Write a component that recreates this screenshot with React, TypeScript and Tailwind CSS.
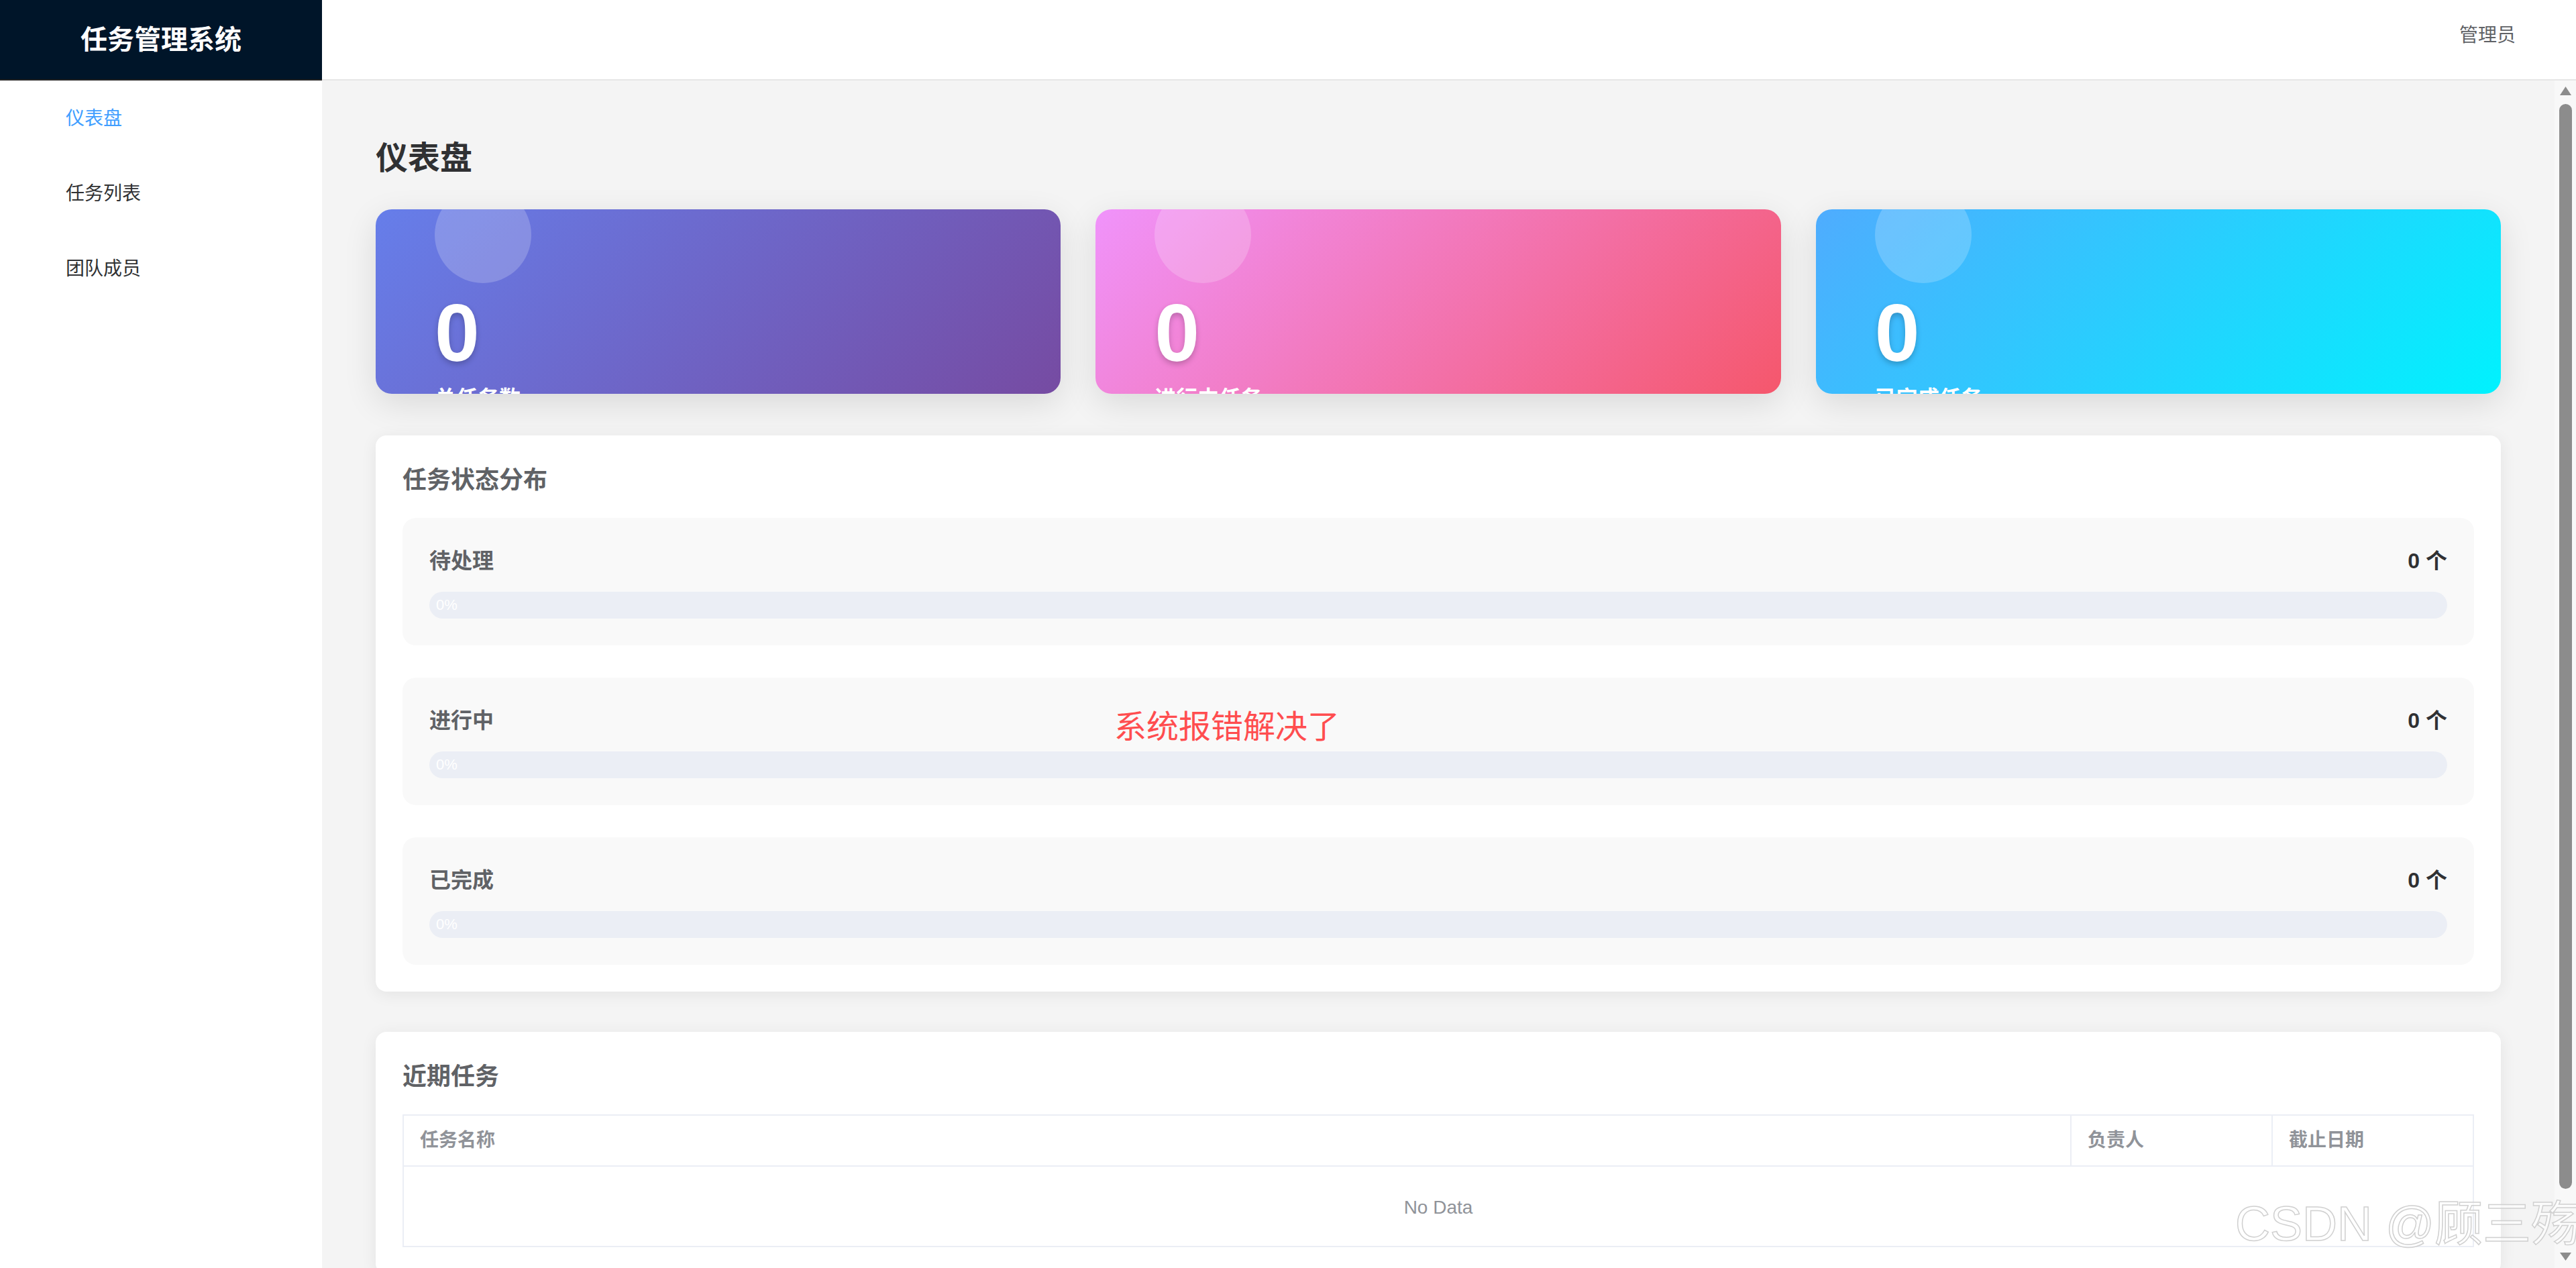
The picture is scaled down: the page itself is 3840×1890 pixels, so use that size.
import React from "react";

const statCards = [
  { value: 0, label: "总任务数", bg: "bg-[linear-gradient(135deg,#667eea_0%,#764ba2_100%)]" },
  { value: 0, label: "进行中任务", bg: "bg-[linear-gradient(135deg,#f093fb_0%,#f5576c_100%)]" },
  { value: 0, label: "已完成任务", bg: "bg-[linear-gradient(135deg,#4facfe_0%,#00f2fe_100%)]" },
];

const statusList = [
  { name: "待处理", count: 0, percent: 0 },
  { name: "进行中", count: 0, percent: 0 },
  { name: "已完成", count: 0, percent: 0 },
];

const menu = [
  { name: "仪表盘", active: true },
  { name: "任务列表", active: false },
  { name: "团队成员", active: false },
];

const StatCard = ({ value, label, bg }: { value: number; label: string; bg: string }) => (
  <div
    className={`relative h-[275px] overflow-hidden rounded-[24px] pl-[88px] pt-[124px] text-white shadow-[0_14px_50px_rgba(0,0,0,0.11)] ${bg}`}
  >
    {/* 装饰圆 */}
    <div className="absolute left-[88px] top-[-34px] h-[144px] w-[144px] rounded-full bg-white/20" />
    <div className="relative text-[120px] font-bold leading-none [text-shadow:0_4px_8px_rgba(0,0,0,0.22)]">
      {value}
    </div>
    <div className="relative mt-[14px] text-[32px] font-bold leading-[48px]">{label}</div>
  </div>
);

const StatusItem = ({ name, count, percent }: { name: string; count: number; percent: number }) => (
  <div className="rounded-[20px] bg-[#f9f9f9] p-[40px]">
    <div className="flex items-center justify-between">
      <span className="text-[32px] font-bold leading-[48px] text-[#606266]">{name}</span>
      <span className="text-[32px] font-bold leading-[48px] text-[#303133]">{count} 个</span>
    </div>
    {/* 进度条，0% 时只剩文字 */}
    <div className="relative mt-[22px] h-[40px] overflow-hidden rounded-full bg-[#ebeef5]">
      {percent > 0 && (
        <div className="absolute inset-y-0 left-0 rounded-full bg-[#409eff]" style={{ width: `${percent}%` }} />
      )}
      <span className="relative pl-[10px] text-[22px] leading-[40px] text-white">{percent}%</span>
    </div>
  </div>
);

export default function App() {
  return (
    <div className="relative flex h-[1890px] w-[3840px] flex-col overflow-hidden font-['Liberation_Sans','Noto_Sans_CJK_SC',sans-serif]">
      {/* 顶栏 */}
      <header className="flex h-[120px] shrink-0">
        <div className="flex w-[480px] items-center justify-center border-b-2 border-[#222222] bg-[#001529] text-[40px] font-bold text-white">
          任务管理系统
        </div>
        <div className="flex flex-1 items-center justify-end border-b-2 border-[#e6e6e6] bg-white pb-[12px] pr-[90px] text-[28px] text-[#606266]">
          管理员
        </div>
      </header>

      <div className="flex min-h-0 flex-1">
        {/* 侧边菜单 */}
        <aside className="w-[480px] shrink-0 bg-white">
          {menu.map((m) => (
            <div
              key={m.name}
              className={`flex h-[112px] items-center pl-[98px] pt-[2px] text-[28px] ${m.active ? "text-[#409eff]" : "text-[#303133]"}`}
            >
              {m.name}
            </div>
          ))}
        </aside>

        <main className="flex min-w-0 flex-1 bg-[#f4f4f4]">
          <div className="min-w-0 flex-1 overflow-hidden px-[80px] pt-[80px]">
            <h1 className="text-[48px] font-bold leading-[72px] text-[#303133]">仪表盘</h1>

            <div className="mt-[40px] grid grid-cols-3 gap-[52px]">
              {statCards.map((c) => (
                <StatCard key={c.label} {...c} />
              ))}
            </div>

            {/* 任务状态分布 */}
            <section className="mt-[62px] rounded-[16px] bg-white p-[40px] shadow-[0_4px_24px_rgba(0,0,0,0.07)]">
              <h2 className="mb-[29px] text-[36px] font-bold leading-[54px] text-[#606266]">任务状态分布</h2>
              <div className="flex flex-col gap-[48px]">
                {statusList.map((s) => (
                  <StatusItem key={s.name} {...s} />
                ))}
              </div>
            </section>

            {/* 近期任务 */}
            <section className="mt-[60px] rounded-[16px] bg-white p-[40px] shadow-[0_4px_24px_rgba(0,0,0,0.07)]">
              <h2 className="mb-[29px] text-[36px] font-bold leading-[54px] text-[#606266]">近期任务</h2>
              <div className="border-2 border-[#ebeef5]">
                <div className="grid h-[76px] grid-cols-[1fr_300px_300px] border-b-2 border-[#ebeef5] text-[28px] font-bold text-[#909399]">
                  <div className="flex items-center px-[24px]">任务名称</div>
                  <div className="flex items-center border-l-2 border-[#ebeef5] px-[24px]">负责人</div>
                  <div className="flex items-center border-l-2 border-[#ebeef5] px-[24px]">截止日期</div>
                </div>
                <div className="flex h-[118px] items-center justify-center pt-[4px] text-[28px] text-[#909399]">No Data</div>
              </div>
            </section>
          </div>

          {/* 滚动条 */}
          <div className="flex w-[32px] shrink-0 flex-col items-center bg-[#f8f8f8] pb-[10px] pt-[8px]">
            <svg width="19" height="15" viewBox="0 0 19 15">
              <path d="M9.5 1 L18 14 L1 14 Z" fill="#8c8c8c" />
            </svg>
            <div className="mt-[12px] h-[1617px] w-[19px] rounded-full bg-[#8c8c8c]" />
            <svg className="mt-auto" width="19" height="14" viewBox="0 0 19 14">
              <path d="M1 1 L18 1 L9.5 13 Z" fill="#8c8c8c" />
            </svg>
          </div>
        </main>
      </div>

      {/* 截图上的标注 */}
      <div className="absolute left-[1661px] top-[1055px] font-['Noto_Sans_CJK_SC',sans-serif] text-[48px] leading-none text-[#ff4d4f]">
        系统报错解决了
      </div>
      <div className="pointer-events-none absolute left-[3332px] top-[1788px] whitespace-nowrap text-[72px] leading-none text-white/60 [-webkit-text-stroke:1.5px_#d0d0d0]">
        CSDN @顾三殇
      </div>
    </div>
  );
}
